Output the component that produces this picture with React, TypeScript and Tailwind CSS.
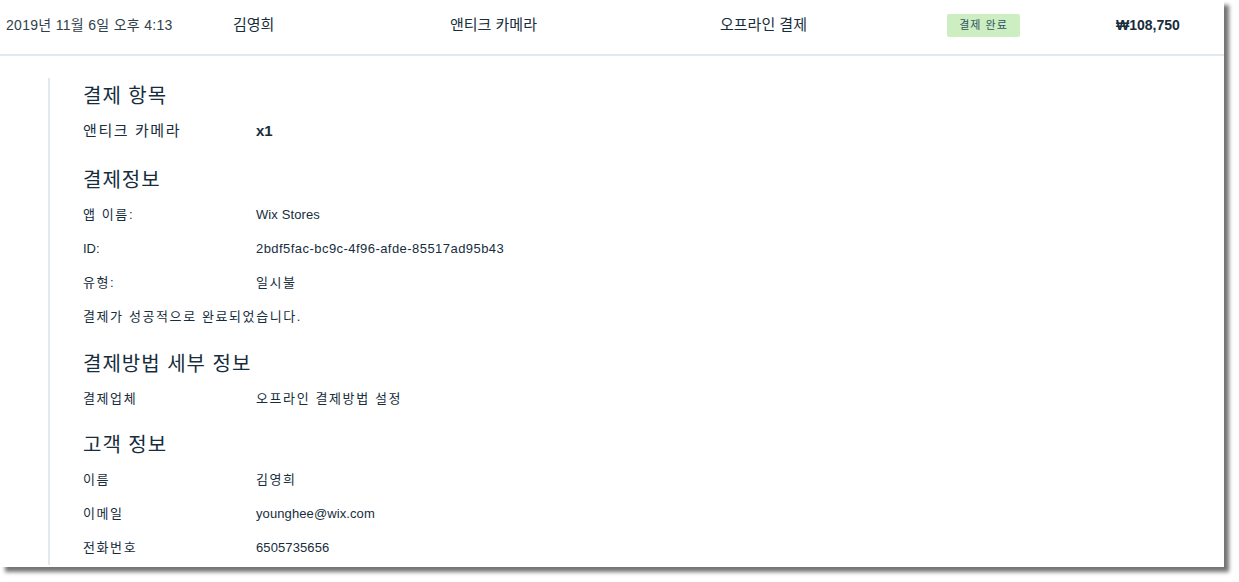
import React from "react";

const font = { fontFamily: '"Liberation Sans", "Noto Sans CJK KR", sans-serif' };

const isKo = (s: string) => /[가-힣]/.test(s);

function Heading({ children, className = "" }: { children: React.ReactNode; className?: string }) {
  return (
    <div className={`h-[36px] flex items-center text-[20px] tracking-[1px] text-[#162d3d] ${className}`}>{children}</div>
  );
}

function Row({ label, value, valueClass }: { label: string; value?: string; valueClass?: string }) {
  return (
    <div className="h-[34px] flex items-center text-[13px] text-[#162d3d] whitespace-nowrap">
      <div className={`w-[173px] shrink-0 ${isKo(label) ? "tracking-[1.6px]" : "tracking-normal"}`}>{label}</div>
      {value !== undefined && (
        <div className={valueClass ?? (isKo(value) ? "tracking-[1.6px]" : "tracking-[0.1px]")}>{value}</div>
      )}
    </div>
  );
}

export default function App() {
  return (
    <div className="w-[1239px] h-[582px] bg-white" style={font}>
      <div className="w-[1224px] h-[567px] bg-white shadow-[5px_5px_4px_rgba(0,0,0,0.55)] flex flex-col">
        <div className="h-[56px] shrink-0 flex items-center pb-[4px] pl-[6px] border-b-2 border-[#e2e8ef] text-[15px] text-[#162d3d] whitespace-nowrap">
          <div className="w-[227px] text-[14px] tracking-[0.3px] text-[#2f3f4c]">2019년 11월 6일 오후 4:13</div>
          <div className="w-[217px]">김영희</div>
          <div className="w-[270px]">앤티크 카메라</div>
          <div className="w-[227px]">오프라인 결제</div>
          <div className="w-[169px]">
            <div className="w-[73px] h-[23px] rounded-[2px] bg-[#cdeec0] flex items-center justify-center text-[11px] tracking-[1px] text-[#32536a]">
              결제 완료
            </div>
          </div>
          <div className="font-bold text-[14px]">₩108,750</div>
        </div>
        <div className="ml-[48px] mt-[22px] border-l-2 border-[#e2e8ef] pl-[33px] flex flex-col">
          <Heading>결제 항목</Heading>
          <div className="h-[34px] flex items-center text-[15px] text-[#162d3d]">
            <div className="w-[173px] shrink-0 tracking-[1.6px]">앤티크 카메라</div>
            <div className="font-bold">x1</div>
          </div>
          <Heading className="mt-[14px]">결제정보</Heading>
          <Row label="앱 이름:" value="Wix Stores" />
          <Row label="ID:" value="2bdf5fac-bc9c-4f96-afde-85517ad95b43" valueClass="tracking-[0.45px]" />
          <Row label="유형:" value="일시불" />
          <Row label="결제가 성공적으로 완료되었습니다." />
          <Heading className="mt-[12px]">결제방법 세부 정보</Heading>
          <Row label="결제업체" value="오프라인 결제방법 설정" />
          <Heading className="mt-[11px]">고객 정보</Heading>
          <Row label="이름" value="김영희" />
          <Row label="이메일" value="younghee@wix.com" />
          <Row label="전화번호" value="6505735656" />
        </div>
      </div>
    </div>
  );
}
